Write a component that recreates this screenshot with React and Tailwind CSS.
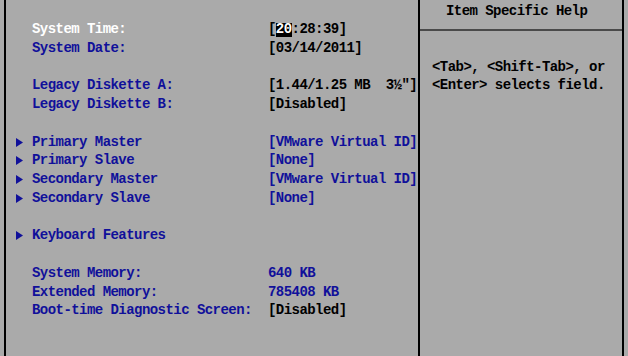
import React from "react";

const Arrow = () => (
  <svg width="7" height="9" viewBox="0 0 7 9" className="block">
    <polygon points="0,0 7,4.5 0,9" fill="#10109a" />
  </svg>
);

function Row({ arrow, label, labelClass = "text-[#10109a]", children }) {
  return (
    <div className="flex h-[18.74px] items-center pl-[10px]">
      <div className="flex w-[16px] items-center">{arrow ? <Arrow /> : null}</div>
      <div className={"w-[236px] " + labelClass}>{label}</div>
      <div className="flex items-center">{children}</div>
    </div>
  );
}

const Spacer = () => <div className="h-[18.74px]" />;

export default function App() {
  return (
    <div
      className="flex h-[356px] w-[628px] overflow-hidden bg-[#aaaaaa] pl-[4px] text-[14px] font-bold leading-[18.74px] tracking-[-0.55px] whitespace-pre"
      style={{ fontFamily: '"Liberation Mono", "DejaVu Sans Mono", monospace' }}
    >
      <div className="flex w-[414px] flex-col border-l-2 border-black pt-[1.5px]">
        <Spacer />
        <Row label="System Time:" labelClass="text-white">
          <span className="text-black">[</span>
          <span className="inline-flex h-[14px] items-center bg-black text-white">20</span>
          <span className="text-black">:28:39]</span>
        </Row>
        <Row label="System Date:">
          <span className="text-black">[03/14/2011]</span>
        </Row>
        <Spacer />
        <Row label="Legacy Diskette A:">
          <span className="text-black">[1.44/1.25 MB  3½"]</span>
        </Row>
        <Row label="Legacy Diskette B:">
          <span className="text-black">[Disabled]</span>
        </Row>
        <Spacer />
        <Row arrow label="Primary Master">
          <span className="text-[#10109a]">[VMware Virtual ID]</span>
        </Row>
        <Row arrow label="Primary Slave">
          <span className="text-[#10109a]">[None]</span>
        </Row>
        <Row arrow label="Secondary Master">
          <span className="text-[#10109a]">[VMware Virtual ID]</span>
        </Row>
        <Row arrow label="Secondary Slave">
          <span className="text-[#10109a]">[None]</span>
        </Row>
        <Spacer />
        <Row arrow label="Keyboard Features" />
        <Spacer />
        <Row label="System Memory:">
          <span className="text-[#10109a]">640 KB</span>
        </Row>
        <Row label="Extended Memory:">
          <span className="text-[#10109a]">785408 KB</span>
        </Row>
        <Row label="Boot-time Diagnostic Screen:">
          <span className="text-black">[Disabled]</span>
        </Row>
      </div>
      <div className="flex w-[206px] flex-col border-x-2 border-black pt-[1.5px]">
        <div className="h-[18.74px] pl-[26px] text-black">Item Specific Help</div>
        <div className="flex h-[18.74px] items-center">
          <div className="h-[2px] w-full bg-[#4a4a4a]" />
        </div>
        <Spacer />
        <div className="h-[18.74px] pl-[12px] text-black">{"<Tab>, <Shift-Tab>, or"}</div>
        <div className="h-[18.74px] pl-[12px] text-black">{"<Enter> selects field."}</div>
      </div>
    </div>
  );
}
